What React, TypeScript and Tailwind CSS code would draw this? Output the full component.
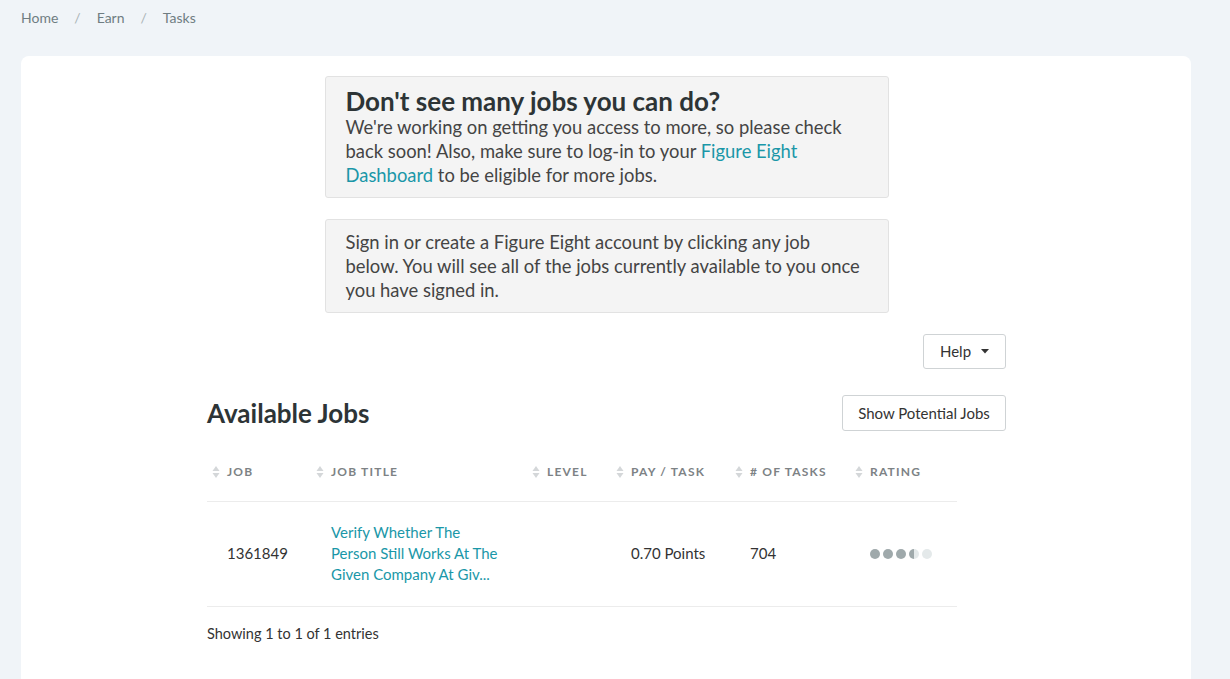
import React from "react";

type Job = {
  id: string;
  title: string;
  level: string;
  pay: string;
  tasks: string;
  rating: number;
};

const jobs: Job[] = [
  {
    id: "1361849",
    title: "Verify Whether The Person Still Works At The Given Company At Giv...",
    level: "",
    pay: "0.70 Points",
    tasks: "704",
    rating: 3.5,
  },
];

const columns = [
  { label: "Job", width: "w-[104px]" },
  { label: "Job Title", width: "w-[216px]" },
  { label: "Level", width: "w-[84px]" },
  { label: "Pay / Task", width: "w-[119px]" },
  { label: "# of Tasks", width: "w-[120px]" },
  { label: "Rating", width: "w-[107px]" },
];

function SortIcon() {
  return (
    <svg
      className="absolute left-[5px] top-1/2 -translate-y-1/2"
      width="8"
      height="14"
      viewBox="0 0 8 14"
      aria-hidden
    >
      <path d="M4 1 L7.5 6 H0.5 Z" fill="#d4d7d9" />
      <path d="M4 13 L7.5 8 H0.5 Z" fill="#d4d7d9" />
    </svg>
  );
}

function Rating({ value }: { value: number }) {
  return (
    <div className="flex items-center gap-[3px]">
      {[0, 1, 2, 3, 4].map((i) => {
        const full = value >= i + 1;
        const half = !full && value > i;
        return (
          <span
            key={i}
            className="h-[10px] w-[10px] rounded-full"
            style={{
              background: full
                ? "#9fa9ab"
                : half
                  ? "linear-gradient(90deg, #9fa9ab 50%, #e4e9ea 50%)"
                  : "#e4e9ea",
            }}
          />
        );
      })}
    </div>
  );
}

export default function App() {
  return (
    <div className="min-h-[679px] bg-[#f0f4f8] pl-[21px] pr-[39px] font-['Lato','Noto_Sans',sans-serif] text-[#333]">
      <nav className="flex h-[35px] items-center text-[14px] text-[#6f7d82]">
        <span>Home</span>
        <span className="px-[16px] text-[#a9b3b6]">/</span>
        <span>Earn</span>
        <span className="px-[16px] text-[#a9b3b6]">/</span>
        <span>Tasks</span>
      </nav>

      <main className="mt-[21px] min-h-[640px] rounded-t-[8px] bg-white pt-5">
        <div className="ml-[186px] w-[799px]">
          <div className="mx-auto flex w-[564px] flex-col gap-[21px]">
            <div className="rounded-[3px] border border-[#e2e2e2] bg-[#f4f4f4] py-[10px] pl-5 pr-6">
              <h2 className="text-[26px] font-bold leading-[28px] text-[#2d3436]">
                Don't see many jobs you can do?
              </h2>
              <p className="text-[18.4px] leading-[24px] text-[#444]">
                We're working on getting you access to more, so please check
                back soon! Also, make sure to log-in to your{" "}
                <a className="text-[#1a97a8]" href="#">
                  Figure Eight Dashboard
                </a>{" "}
                to be eligible for more jobs.
              </p>
            </div>
            <div className="rounded-[3px] border border-[#e2e2e2] bg-[#f4f4f4] py-[10px] pl-5 pr-6">
              <p className="text-[18.4px] leading-[24px] text-[#444]">
                Sign in or create a Figure Eight account by clicking any job
                below. You will see all of the jobs currently available to you
                once you have signed in.
              </p>
            </div>
          </div>

          <div className="mt-[21px] flex justify-end">
            <button
              type="button"
              className="flex h-[35px] w-[83px] items-center justify-center gap-[10px] rounded-[3px] border border-[#cfd3d5] bg-white text-[15px] text-[#333]"
            >
              Help
              <svg width="8" height="5" viewBox="0 0 8 5" aria-hidden>
                <path d="M0 0 H8 L4 4.5 Z" fill="#333" />
              </svg>
            </button>
          </div>

          <div className="mt-[26px] flex items-center justify-between">
            <h1 className="text-[26px] font-bold leading-[36px] text-[#2d3436]">
              Available Jobs
            </h1>
            <button
              type="button"
              className="h-[36px] w-[164px] rounded-[3px] border border-[#cfd3d5] bg-white text-[15px] text-[#333]"
            >
              Show Potential Jobs
            </button>
          </div>

          <table className="mt-[13px] w-[750px] border-collapse text-left">
            <thead>
              <tr className="h-[57px] border-b border-[#ececec]">
                {columns.map((col) => (
                  <th
                    key={col.label}
                    className={`${col.width} relative pl-5 text-[12px] font-bold uppercase tracking-[1.2px] text-[#7d8285]`}
                  >
                    <SortIcon />
                    {col.label}
                  </th>
                ))}
              </tr>
            </thead>
            <tbody>
              {jobs.map((job) => (
                <tr
                  key={job.id}
                  className="h-[105px] border-b border-[#ececec] text-[15px] leading-[21px]"
                >
                  <td className="pl-5">{job.id}</td>
                  <td className="pl-5 pr-6">
                    <a className="text-[#1a97a8]" href="#">
                      {job.title}
                    </a>
                  </td>
                  <td className="pl-5">{job.level}</td>
                  <td className="pl-5">{job.pay}</td>
                  <td className="pl-5">{job.tasks}</td>
                  <td className="pl-5">
                    <Rating value={job.rating} />
                  </td>
                </tr>
              ))}
            </tbody>
          </table>

          <p className="mt-[16px] text-[14.5px] leading-[22px] text-[#333]">
            Showing 1 to 1 of 1 entries
          </p>
        </div>
      </main>
    </div>
  );
}
